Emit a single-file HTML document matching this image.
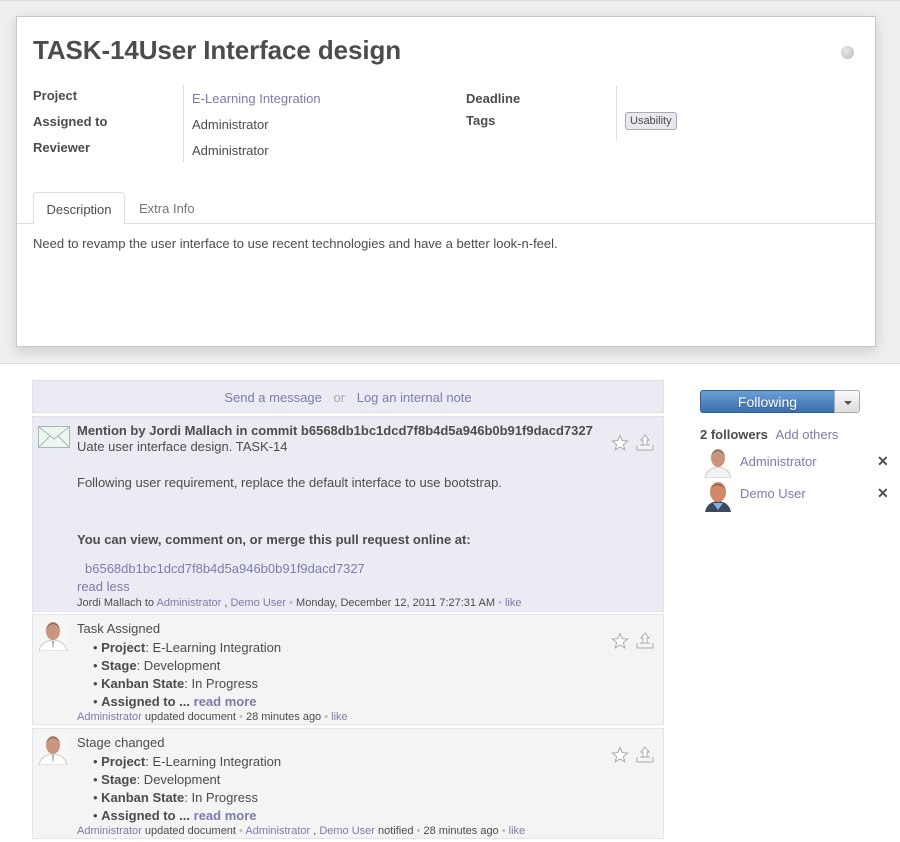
<!DOCTYPE html>
<html><head><meta charset="utf-8"><style>
*{margin:0;padding:0;box-sizing:border-box}
body{width:900px;height:842px;background:#fff;font-family:"Liberation Sans",Arial,sans-serif;font-size:13px;color:#4c4c4c;position:relative;overflow:hidden}
.abs{position:absolute}
.top{left:0;top:0;width:900px;height:364px;background:#efefef;border-bottom:1px solid #dcdcdc;border-top:1px solid #ddd}
.sheet{left:16px;top:16px;width:860px;height:331px;background:#fff;border:1px solid #c8c8d0;box-shadow:0 4px 12px rgba(0,0,0,.15)}
a,.lk{color:#7c7bad;text-decoration:none}
.lbl{font-weight:bold;color:#4c4c4c}
.msg{position:absolute;left:32px;width:632px;border:1px solid #e4e4ec}
.ico{position:absolute}
.b{font-weight:bold}
.foot{font-size:11px;color:#4c4c4c}
.dot{color:#bbb}
ul{list-style:none}
</style></head><body>
<div class="abs top"></div>
<div class="abs sheet">
  <div class="abs" style="left:16px;top:18px;font-size:26px;font-weight:bold;color:#4c4c4c;letter-spacing:-0.1px">TASK-14User Interface design</div>
  <div class="abs" style="left:824px;top:29px;width:13px;height:13px;border-radius:50%;background:radial-gradient(circle at 40% 35%,#e8e8e8,#b8b8b8)"></div>
  <div class="abs lbl" style="left:16px;top:71px">Project</div>
  <div class="abs lbl" style="left:16px;top:97px">Assigned to</div>
  <div class="abs lbl" style="left:16px;top:123px">Reviewer</div>
  <div class="abs" style="left:166px;top:68px;width:1px;height:77px;background:#ddd"></div>
  <div class="abs lk" style="left:175px;top:74px">E-Learning Integration</div>
  <div class="abs" style="left:175px;top:100px">Administrator</div>
  <div class="abs" style="left:175px;top:126px">Administrator</div>
  <div class="abs lbl" style="left:449px;top:74px">Deadline</div>
  <div class="abs lbl" style="left:449px;top:96px">Tags</div>
  <div class="abs" style="left:599px;top:69px;width:1px;height:54px;background:#ddd"></div>
  <div class="abs" style="left:608px;top:95px;border:1px solid #aaa;border-radius:3px;background:#e8e8f0;font-size:11px;padding:2px 4px;color:#4c4c4c">Usability</div>
  <div class="abs" style="left:0;top:206px;width:858px;height:1px;background:#ddd"></div>
  <div class="abs" style="left:16px;top:175px;width:92px;height:32px;background:#fff;border:1px solid #ddd;border-bottom:none;border-radius:4px 4px 0 0;padding-top:9px;text-align:center">Description</div>
  <div class="abs" style="left:122px;top:184px;color:#777">Extra Info</div>
  <div class="abs" style="left:16px;top:219px">Need to revamp the user interface to use recent technologies and have a better look-n-feel.</div>
</div>

<div class="abs" style="left:32px;top:380px;width:632px;height:33px;background:#ebebf3;border:1px solid #e0e0ea;text-align:center;padding-top:9px"><span class="lk">Send a message</span> <span style="color:#aaa;margin:0 8px">or</span> <span class="lk">Log an internal note</span></div>

<div class="msg" style="top:416px;height:196px;background:#ebebf3">
  <svg class="ico" style="left:5px;top:9px" width="32" height="22" viewBox="0 0 32 22"><rect x=".5" y=".5" width="31" height="21" fill="#eef6f2" stroke="#a6b8b0"/><path d="M1 1 L16 13 L31 1 M1 21 L12 10 M31 21 L20 10" fill="none" stroke="#a6b8b0"/></svg>
  <div class="abs b" style="left:44px;top:6px">Mention by Jordi Mallach in commit b6568db1bc1dcd7f8b4d5a946b0b91f9dacd7327</div>
  <div class="abs" style="left:44px;top:22px">Uate user interface design. TASK-14</div>
  <div class="abs" style="left:44px;top:58px">Following user requirement, replace the default interface to use bootstrap.</div>
  <div class="abs b" style="left:44px;top:115px">You can view, comment on, or merge this pull request online at:</div>
  <div class="abs lk" style="left:52px;top:144px">b6568db1bc1dcd7f8b4d5a946b0b91f9dacd7327</div>
  <div class="abs lk" style="left:44px;top:162px">read less</div>
  <div class="abs foot" style="left:44px;top:180px">Jordi Mallach to <span class="lk">Administrator</span> , <span class="lk">Demo User</span> <span class="dot">•</span> Monday, December 12, 2011 7:27:31 AM <span class="dot">•</span> <span class="lk">like</span></div>
  <svg class="ico" style="left:578px;top:17px" width="18" height="18" viewBox="0 0 18 18"><path d="M9 1.5 L11.2 6.6 L16.5 7 L12.4 10.5 L13.7 15.8 L9 13 L4.3 15.8 L5.6 10.5 L1.5 7 L6.8 6.6 Z" fill="#fff" stroke="#aaa"/></svg>
  <svg class="ico" style="left:602px;top:16px" width="20" height="20" viewBox="0 0 20 20"><path d="M2 12 L2 17 L18 17 L18 12 M5 12 L15 12" fill="#f4f4f4" stroke="#aaa"/><path d="M10 2 L14 7 L12 7 L12 12 L8 12 L8 7 L6 7 Z" fill="#fff" stroke="#aaa"/></svg>
</div>

<div class="msg" style="top:614px;height:111px;background:#f4f4f4">
  <svg class="ico" style="left:4px;top:4px" width="32" height="32" viewBox="0 0 32 32"><rect width="32" height="32" fill="#f6f6f6"/><path d="M2 32 Q4 22 16 21 Q28 22 30 32Z" fill="#fff" stroke="#ccc"/><ellipse cx="16" cy="12" rx="7" ry="9" fill="#c9957c"/><path d="M9 10 Q16 0 23 10 Q21 4 16 4 Q11 4 9 10Z" fill="#7a6a60"/><path d="M15 22 L16 31 L17 22Z" fill="#8aa0b8"/></svg>
  <div class="abs" style="left:44px;top:6px">Task Assigned</div>
  <ul class="abs" style="left:60px;top:24px;line-height:18px">
    <li>• <b>Project</b>: E-Learning Integration</li>
    <li>• <b>Stage</b>: Development</li>
    <li>• <b>Kanban State</b>: In Progress</li>
    <li>• <b>Assigned to ...</b> <b class="lk">read more</b></li>
  </ul>
  <div class="abs foot" style="left:44px;top:96px"><span class="lk">Administrator</span> updated document <span class="dot">•</span> 28 minutes ago <span class="dot">•</span> <span class="lk">like</span></div>
  <svg class="ico" style="left:578px;top:17px" width="18" height="18" viewBox="0 0 18 18"><path d="M9 1.5 L11.2 6.6 L16.5 7 L12.4 10.5 L13.7 15.8 L9 13 L4.3 15.8 L5.6 10.5 L1.5 7 L6.8 6.6 Z" fill="#fff" stroke="#aaa"/></svg>
  <svg class="ico" style="left:602px;top:16px" width="20" height="20" viewBox="0 0 20 20"><path d="M2 12 L2 17 L18 17 L18 12 M5 12 L15 12" fill="#f4f4f4" stroke="#aaa"/><path d="M10 2 L14 7 L12 7 L12 12 L8 12 L8 7 L6 7 Z" fill="#fff" stroke="#aaa"/></svg>
</div>

<div class="msg" style="top:728px;height:111px;background:#f4f4f4">
  <svg class="ico" style="left:4px;top:4px" width="32" height="32" viewBox="0 0 32 32"><rect width="32" height="32" fill="#f6f6f6"/><path d="M2 32 Q4 22 16 21 Q28 22 30 32Z" fill="#fff" stroke="#ccc"/><ellipse cx="16" cy="12" rx="7" ry="9" fill="#c9957c"/><path d="M9 10 Q16 0 23 10 Q21 4 16 4 Q11 4 9 10Z" fill="#7a6a60"/><path d="M15 22 L16 31 L17 22Z" fill="#8aa0b8"/></svg>
  <div class="abs" style="left:44px;top:6px">Stage changed</div>
  <ul class="abs" style="left:60px;top:24px;line-height:18px">
    <li>• <b>Project</b>: E-Learning Integration</li>
    <li>• <b>Stage</b>: Development</li>
    <li>• <b>Kanban State</b>: In Progress</li>
    <li>• <b>Assigned to ...</b> <b class="lk">read more</b></li>
  </ul>
  <div class="abs foot" style="left:44px;top:96px"><span class="lk">Administrator</span> updated document <span class="dot">•</span> <span class="lk">Administrator</span> , <span class="lk">Demo User</span> notified <span class="dot">•</span> 28 minutes ago <span class="dot">•</span> <span class="lk">like</span></div>
  <svg class="ico" style="left:578px;top:17px" width="18" height="18" viewBox="0 0 18 18"><path d="M9 1.5 L11.2 6.6 L16.5 7 L12.4 10.5 L13.7 15.8 L9 13 L4.3 15.8 L5.6 10.5 L1.5 7 L6.8 6.6 Z" fill="#fff" stroke="#aaa"/></svg>
  <svg class="ico" style="left:602px;top:16px" width="20" height="20" viewBox="0 0 20 20"><path d="M2 12 L2 17 L18 17 L18 12 M5 12 L15 12" fill="#f4f4f4" stroke="#aaa"/><path d="M10 2 L14 7 L12 7 L12 12 L8 12 L8 7 L6 7 Z" fill="#fff" stroke="#aaa"/></svg>
</div>

<div class="abs" style="left:700px;top:390px;width:135px;height:23px;background:linear-gradient(#6a9fd4,#3a70ac);border:1px solid #2e5f96;border-radius:3px 0 0 3px;color:#fff;text-align:center;font-size:14px;padding-top:3px;text-shadow:0 1px 1px rgba(0,0,0,.3)">Following</div>
<div class="abs" style="left:834px;top:390px;width:26px;height:23px;background:linear-gradient(#fafafa,#ddd);border:1px solid #aaa;border-radius:0 3px 3px 0"><div style="position:absolute;left:9px;top:10px;border:4px solid transparent;border-top:4px solid #555;border-bottom:none"></div></div>
<div class="abs" style="left:700px;top:427px"><b>2 followers</b> <span class="lk" style="margin-left:4px">Add others</span></div>
<svg class="abs" style="left:704px;top:446px" width="28" height="32" viewBox="0 0 28 32"><rect width="28" height="32" fill="#fff"/><path d="M1 32 Q3 22 14 21 Q25 22 27 32Z" fill="#f2f2f2" stroke="#ccc"/><ellipse cx="14" cy="12" rx="7" ry="9" fill="#c9957c"/><path d="M7 10 Q14 0 21 10 Q19 4 14 4 Q9 4 7 10Z" fill="#7a6a60"/></svg>
<div class="abs lk" style="left:740px;top:454px">Administrator</div>
<div class="abs" style="left:877px;top:453px;font-weight:bold;font-size:14px">✕</div>
<svg class="abs" style="left:704px;top:480px" width="28" height="32" viewBox="0 0 28 32"><rect width="28" height="32" fill="#fff"/><path d="M1 32 Q3 22 14 21 Q25 22 27 32Z" fill="#3a4a60"/><path d="M9 23 L14 30 L19 23Z" fill="#8ab0d8"/><ellipse cx="14" cy="12" rx="8" ry="10" fill="#d08868"/><path d="M6 10 Q14 0 22 10 Q18 4 14 4 Q10 4 6 10Z" fill="#7a4a20"/></svg>
<div class="abs lk" style="left:740px;top:486px">Demo User</div>
<div class="abs" style="left:877px;top:485px;font-weight:bold;font-size:14px">✕</div>
</body></html>
